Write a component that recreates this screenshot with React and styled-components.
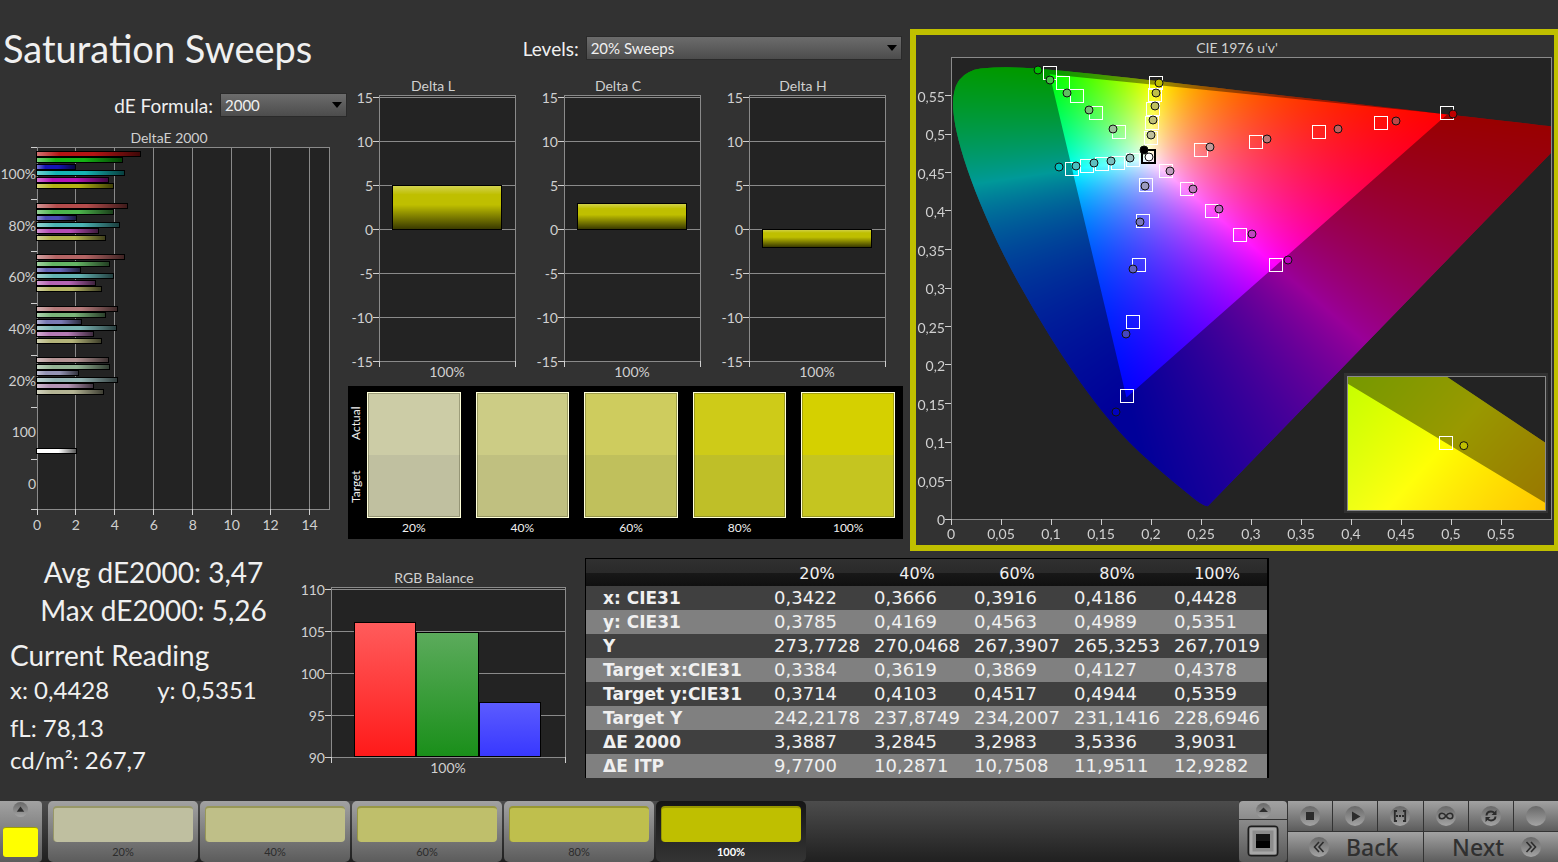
import React, { useLayoutEffect, useRef } from 'react';
import styled, { createGlobalStyle } from 'styled-components';

const GlobalStyle = createGlobalStyle`
  * { box-sizing: border-box; }
  body { margin: 0; background: #323232; color: #f0f0f0; font-family: Lato, "Noto Sans", sans-serif; }
  button, select { font: inherit; margin: 0; }
`;

/* ---------- data ---------- */

const LEVELS = ['20%', '40%', '60%', '80%', '100%'];
const PALETTE = ['#bfbfa0', '#bfbf88', '#bfbf6b', '#bfbf4d', '#bfbf00'];
const ACTUAL = ['#cccca6', '#cccc85', '#cecc5e', '#cecb18', '#d5d000'];
const TARGET = ['#c0c0a0', '#c0c080', '#c0c05c', '#bfbf28', '#c5c520'];

const DELTA_E = [
  { shade: 20, values: [5.27, 4.37, 1.94, 4.47, 3.65, 3.9] },
  { shade: 76, values: [4.62, 3.9, 2.0, 4.21, 3.13, 3.5] },
  { shade: 100, values: [4.47, 3.7, 2.2, 3.9, 2.98, 3.29] },
  { shade: 122, values: [4.11, 3.5, 2.26, 4.06, 2.88, 3.29] },
  { shade: 148, values: [3.65, 3.7, 2.1, 4.11, 2.88, 3.39] },
];
const DELTA_E_LABELS = ['100%', '80%', '60%', '40%', '20%', '100', '0'];
const HUES = ['100', '010', '001', '011', '101', '110'];

const tint = (mask, high, low) =>
  `rgb(${mask.split('').map((bit) => (bit === '1' ? high : low)).join(',')})`;

const TABLE_ROWS = [
  ['x: CIE31', '0,3422', '0,3666', '0,3916', '0,4186', '0,4428'],
  ['y: CIE31', '0,3785', '0,4169', '0,4563', '0,4989', '0,5351'],
  ['Y', '273,7728', '270,0468', '267,3907', '265,3253', '267,7019'],
  ['Target x:CIE31', '0,3384', '0,3619', '0,3869', '0,4127', '0,4378'],
  ['Target y:CIE31', '0,3714', '0,4103', '0,4517', '0,4944', '0,5359'],
  ['Target Y', '242,2178', '237,8749', '234,2007', '231,1416', '228,6946'],
  ['ΔE 2000', '3,3887', '3,2845', '3,2983', '3,5336', '3,9031'],
  ['ΔE ITP', '9,7700', '10,2871', '10,7508', '11,9511', '12,9282'],
];

/* Marker positions on a 600 x 462 plot, from 20% to 100% saturation. */
const SWEEPS = [
  { hue: '010', targets: [[168, 75], [145, 56], [126, 39], [112, 26], [99, 16]], actual: [[162, 72], [138, 53], [116, 36], [99, 23], [87, 13]] },
  { hue: '110', targets: [[200, 81], [201, 66], [202, 52], [204, 38], [205, 26]], actual: [[200, 78], [202, 63], [204, 49], [205, 36], [208, 26]] },
  { hue: '011', targets: [[182, 103], [167, 106], [151, 107], [136, 109], [121, 112]], actual: [[179, 101], [160, 104], [143, 106], [125, 109], [108, 110]] },
  { hue: '001', targets: [[195, 128], [192, 164], [188, 208], [182, 265], [176, 339]], actual: [[194, 129], [189, 165], [182, 212], [175, 277], [165, 355]] },
  { hue: '101', targets: [[215, 114], [236, 132], [261, 154], [289, 178], [325, 208]], actual: [[219, 114], [242, 132], [268, 152], [301, 177], [337, 203]] },
  { hue: '100', targets: [[250, 93], [305, 85], [368, 75], [430, 66], [496, 56]], actual: [[259, 90], [316, 82], [387, 72], [445, 64], [502, 57]] },
];
const MARKER_SHADES = [155, 120, 95, 70, 0];

/* Spectral locus, CIE 1931 xy. */
const LOCUS = [
  [0.1741, 0.005], [0.1714, 0.0051], [0.1644, 0.0109], [0.1566, 0.0177], [0.144, 0.0297],
  [0.1355, 0.0399], [0.1241, 0.0578], [0.1096, 0.0868], [0.0913, 0.1327], [0.0687, 0.2007],
  [0.0454, 0.295], [0.0235, 0.4127], [0.0082, 0.5384], [0.0039, 0.6548], [0.0139, 0.7502],
  [0.0389, 0.812], [0.0743, 0.8338], [0.1142, 0.8262], [0.1547, 0.8059], [0.1929, 0.7816],
  [0.2296, 0.7543], [0.3016, 0.6923], [0.3731, 0.6245], [0.4441, 0.5547], [0.5125, 0.4866],
  [0.5752, 0.4242], [0.627, 0.3725], [0.6658, 0.334], [0.6915, 0.3083], [0.719, 0.2809],
  [0.7347, 0.2653],
];
const GAMUT = [[0.68, 0.32], [0.265, 0.69], [0.15, 0.06]];

/* ---------- colour plane ---------- */

const toUv = ([x, y]) => {
  const d = -2 * x + 12 * y + 3;
  return [(4 * x) / d, (9 * y) / d];
};
const fromUv = (u, v) => {
  const d = 6 * u - 16 * v + 12;
  return [(9 * u) / d, (4 * v) / d];
};

function chromaColor(x, y) {
  const X = x / y;
  const Z = (1 - x - y) / y;
  const rgb = [
    2.4935 * X - 0.9314 - 0.4027 * Z,
    -0.8295 * X + 1.7627 + 0.0236 * Z,
    0.0358 * X - 0.0762 + 0.9569 * Z,
  ].map((c) => Math.max(0, c));
  const top = Math.max(...rgb) || 1;
  return rgb.map((c) => (255 * c) / top);
}

function paintPlane(canvas, space, [x0, x1, y0, y1]) {
  const { width, height } = canvas;
  const ctx = canvas.getContext('2d');
  const field = document.createElement('canvas');
  field.width = width;
  field.height = height;
  const fieldCtx = field.getContext('2d');
  const image = fieldCtx.createImageData(width, height);
  for (let j = 0; j < height; j += 1) {
    const b = y1 - ((j + 0.5) / height) * (y1 - y0);
    for (let i = 0; i < width; i += 1) {
      const a = x0 + ((i + 0.5) / width) * (x1 - x0);
      const [x, y] = space === 'uv' ? fromUv(a, b) : [a, b];
      const [r, g, bl] = chromaColor(x, Math.max(y, 0.001));
      image.data.set([r, g, bl, 255], (j * width + i) * 4);
    }
  }
  fieldCtx.putImageData(image, 0, 0);

  const place = (point) => {
    const [a, b] = space === 'uv' ? toUv(point) : point;
    return [((a - x0) / (x1 - x0)) * width, ((y1 - b) / (y1 - y0)) * height];
  };
  const locus = LOCUS.map(place);
  ctx.clearRect(0, 0, width, height);
  ctx.save();
  ctx.beginPath();
  ctx.moveTo(...locus[0]);
  for (let k = 1; k < locus.length - 1; k += 1) {
    const [cx, cy] = locus[k];
    const [nx, ny] = locus[k + 1];
    ctx.quadraticCurveTo(cx, cy, (cx + nx) / 2, (cy + ny) / 2);
  }
  ctx.lineTo(...locus[locus.length - 1]);
  ctx.closePath();
  ctx.clip();
  ctx.drawImage(field, 0, 0);
  ctx.beginPath();
  ctx.rect(-10, -10, width + 20, height + 20);
  GAMUT.map(place).forEach(([x, y], k) => (k ? ctx.lineTo(x, y) : ctx.moveTo(x, y)));
  ctx.closePath();
  ctx.fillStyle = 'rgba(0, 0, 0, 0.4)';
  ctx.fill('evenodd');
  ctx.restore();
}

/* ---------- layout ---------- */

const Page = styled.div`
  min-height: 100vh;
  display: flex;
  flex-direction: column;
`;
const Upper = styled.main`
  display: grid;
  grid-template-columns: minmax(0, 348fr) minmax(0, 555fr) minmax(0, 655fr);
`;
const Lower = styled.section`
  flex: 1;
  display: grid;
  grid-template-columns: minmax(0, 303fr) minmax(0, 282fr) minmax(0, 684fr) minmax(0, 289fr);
`;
const Column = styled.div`
  display: flex;
  flex-direction: column;
`;
const PageTitle = styled.h1`
  margin: 24px 0 21px;
  padding-left: 3px;
  font-size: 38px;
  font-weight: 400;
  line-height: 48px;
  white-space: nowrap;
`;
const Field = styled.label`
  display: flex;
  justify-content: flex-end;
  align-items: center;
  gap: 7px;
  height: 24px;
  margin-top: ${(p) => p.$top || 0}px;
  font-size: 19px;
`;
const SelectBox = styled.span`
  position: relative;
  width: ${(p) => p.$width};
  margin-right: 1px;
  &::after {
    content: '';
    position: absolute;
    right: 5px;
    top: 9px;
    border: solid transparent;
    border-width: 6px 5px 0;
    border-top-color: #000;
  }
`;
const Select = styled.select`
  appearance: none;
  display: block;
  width: 100%;
  height: 24px;
  padding: 0 4px;
  border: 1px solid #2a2a2a;
  border-radius: 0;
  background: linear-gradient(#6c6c6c, #4c4c4c);
  color: #f0f0f0;
  font-size: 15px;
`;
const ChartTitle = styled.h2`
  margin: 0;
  padding-right: 28px;
  color: #d0d0d0;
  font-size: 14px;
  font-weight: 400;
  line-height: 18px;
  text-align: center;
`;
const Chart = styled.div`
  padding: ${(p) => p.$pad};
`;
const Plot = styled.svg`
  display: block;
  width: 100%;
  height: ${(p) => p.$height}px;
  overflow: visible;
  font-size: 14px;
  fill: #d0d0d0;
  line, rect { shape-rendering: crispEdges; }
`;
const GridLine = styled.line`
  stroke: ${(p) => (p.$tick ? '#d0d0d0' : '#8a8a8a')};
`;
const Frame = styled.rect`
  fill: ${(p) => (p.$empty ? 'none' : '#232323')};
  stroke: #8a8a8a;
`;
const DeltaCharts = styled.div`
  display: grid;
  grid-template-columns: repeat(3, 1fr);
  margin-top: 17px;
`;

const Swatches = styled.section`
  display: flex;
  height: 153px;
  margin-top: 25px;
  padding: 6px 8px 0 0;
  background: #000;
`;
const SwatchList = styled.div`
  flex: 1;
  display: grid;
  grid-template-columns: repeat(5, 1fr);
  column-gap: 15px;
`;
const SideLabels = styled.div`
  display: flex;
  flex-direction: column;
  width: 19px;
  height: 126px;
  font-size: 12px;
`;
const SideLabel = styled.span`
  flex: 1;
  writing-mode: vertical-rl;
  transform: rotate(180deg);
  line-height: 16px;
  text-align: center;
  align-self: flex-start;
`;
const SwatchItem = styled.figure`
  margin: 0;
  font-size: 12px;
`;
const SwatchColor = styled.div`
  height: 126px;
  border: 1px solid #ffffd8;
  box-shadow: inset 0 0 0 1px rgba(70, 70, 40, 0.35);
  background: linear-gradient(${(p) => p.$actual} 50%, ${(p) => p.$target} 50%);
`;
const SwatchCaption = styled.figcaption`
  line-height: 19px;
  text-align: center;
`;

const CiePanel = styled.section`
  align-self: start;
  margin: 29px 0 0 7px;
  border: solid #bfbf00;
  border-width: 6px 4px 6px 6px;
  padding: 4px 3px 26px 35px;
`;
const CieArea = styled.div`
  position: relative;
  display: grid;
  background: #232323;
  & > canvas, & > svg { grid-area: 1 / 1; }
`;
const Plane = styled.canvas`
  display: block;
  width: 100%;
  height: ${(p) => p.$height}px;
`;
const Inset = styled.div`
  position: absolute;
  right: 6px;
  bottom: 9px;
  width: 33%;
  display: grid;
  background: #232323;
  box-shadow: 0 0 0 3px #323232;
  & > canvas, & > svg { grid-area: 1 / 1; }
`;

const Stats = styled.section`
  padding: 2px 0 0 10px;
`;
const BigStat = styled.p`
  margin: 0;
  padding-right: 6px;
  font-size: 28px;
  line-height: 38px;
  text-align: center;
`;
const ReadingTitle = styled.h2`
  margin: 7px 0 0;
  font-size: 28px;
  font-weight: 400;
  line-height: 38px;
`;
const Reading = styled.p`
  display: flex;
  gap: 48px;
  margin: ${(p) => p.$top || 0}px 0 0;
  font-size: 24px;
  line-height: 32px;
`;

const DataTable = styled.table`
  width: 100%;
  margin-top: 7px;
  border: solid #000;
  border-width: 1px 2px 0 1px;
  border-spacing: 0;
  table-layout: fixed;
  align-self: start;
  font-family: "DejaVu Sans", sans-serif;
  font-size: 18px;
  line-height: 24px;
`;
const HeadCell = styled.th`
  width: ${(p) => p.$width};
  height: 27px;
  padding: 2px 0 0;
  background: linear-gradient(#303030 0, #2a2a2a 50%, #181818 52%, #101010 100%);
  font-size: 16px;
  font-weight: 400;
`;
const Row = styled.tr`
  background: #404040;
  &:nth-child(even) { background: #808080; }
`;
const RowHead = styled.th`
  padding: 0 0 0 17px;
  text-align: left;
  white-space: nowrap;
  font-size: 17px;
`;
const Cell = styled.td`
  padding: 0 0 0 7px;
`;

const Footer = styled.footer`
  display: flex;
  height: 61px;
  background: linear-gradient(#4c4c4c, #202020);
`;
const metal = 'linear-gradient(#a2a2a2, #5c5c5c)';
const CurrentPatch = styled.button`
  display: flex;
  flex-direction: column;
  align-items: center;
  justify-content: space-between;
  width: 42px;
  margin-right: 6px;
  padding: 1px 5px 5px 3px;
  border: 0;
  border-radius: 0 4px 4px 0;
  background: ${metal};
`;
const PatchColor = styled.span`
  width: 35px;
  height: 30px;
  border-radius: 3px;
  border-top: 1px solid #a0a000;
  background: #ff0;
`;
const PatchList = styled.nav`
  display: flex;
  flex: 1;
  gap: 2px;
`;
const PatchButton = styled.button`
  display: flex;
  flex-direction: column;
  width: 150px;
  padding: 5px 5px 0;
  border: 0;
  border-radius: 5px;
  background: ${(p) => (p.$active ? 'linear-gradient(#161616, #343434)' : metal)};
  color: ${(p) => (p.$active ? '#fff' : '#2c2c2c')};
  font-size: 11px;
  font-weight: ${(p) => (p.$active ? 700 : 400)};
  line-height: 20px;
  text-align: center;
`;
const PatchFill = styled.span`
  align-self: stretch;
  height: 37px;
  border-radius: 4px;
  border: solid rgba(80, 80, 0, 0.35);
  border-width: 2px 0 0 1px;
  background: ${(p) => p.$color};
`;
const PatchLabel = styled.span`
  align-self: stretch;
`;
const Controls = styled.div`
  display: flex;
  gap: 1px;
  background: #333;
`;
const Stack = styled.div`
  display: flex;
  flex-direction: column;
  gap: 1px;
  width: ${(p) => p.$width}px;
`;
const ButtonRow = styled.div`
  display: grid;
  grid-template-columns: repeat(${(p) => p.$count}, 1fr);
  gap: 1px;
`;
const MetalButton = styled.button`
  display: flex;
  align-items: center;
  justify-content: center;
  height: ${(p) => p.$height}px;
  padding: 0;
  border: 0;
  border-radius: ${(p) => p.$radius || '0'};
  background: ${(p) => p.$tone || metal};
`;
const NavButton = styled(MetalButton)`
  justify-content: ${(p) => p.$align};
  gap: 17px;
  padding: 0 17px 0 21px;
  color: #303030;
  font-family: "Noto Sans", "Open Sans", sans-serif;
  font-size: 23px;
  font-weight: 500;
  line-height: 28px;
`;
const Icon = styled.svg`
  display: block;
  flex: none;
`;

/* ---------- charts ---------- */

function BarFades() {
  return (
    <defs>
      <linearGradient id="fadeAcross" x1="0" x2="1" y1="0" y2="0">
        <stop offset="0" stopColor="#fff" stopOpacity="0.4" />
        <stop offset="0.22" stopColor="#fff" stopOpacity="0" />
        <stop offset="0.55" stopColor="#000" stopOpacity="0" />
        <stop offset="1" stopColor="#000" stopOpacity="0.65" />
      </linearGradient>
      <linearGradient id="fadeDown" x1="0" x2="0" y1="0" y2="1">
        <stop offset="0" stopColor="#fff" stopOpacity="0.35" />
        <stop offset="0.22" stopColor="#fff" stopOpacity="0" />
        <stop offset="0.45" stopColor="#000" stopOpacity="0" />
        <stop offset="1" stopColor="#000" stopOpacity="0.7" />
      </linearGradient>
    </defs>
  );
}

function AcrossBar({ y, value, color }) {
  const size = { y, width: `${(value / 15) * 100}%`, height: 4 };
  return (
    <g>
      <rect {...size} fill={color} stroke="#000" strokeWidth="2" paintOrder="stroke" />
      <rect {...size} fill="url(#fadeAcross)" />
    </g>
  );
}

function DeltaEChart() {
  return (
    <Chart $pad="12px 19px 0 37px">
      <ChartTitle>DeltaE 2000</ChartTitle>
      <Plot $height={362} role="img" aria-label="DeltaE 2000">
        <BarFades />
        <Frame width="100%" height="100%" />
        {[0, 2, 4, 6, 8, 10, 12, 14].map((v) => {
          const x = `${(v / 15) * 100}%`;
          return (
            <g key={v}>
              <GridLine x1={x} x2={x} y1="0" y2="100%" />
              <svg x={x} y="100%" overflow="visible">
                <GridLine $tick y1="0" y2="6" />
                <text y="21" textAnchor="middle">{v}</text>
              </svg>
            </g>
          );
        })}
        {DELTA_E_LABELS.map((label, i) => (
          <g key={label}>
            <GridLine $tick x1="-6" x2="0" y1={i * 52} y2={i * 52} />
            <text x="-1" y={32 + i * 52 - Math.round(i / 3)} textAnchor="end">{label}</text>
          </g>
        ))}
        <GridLine $tick x1="-6" x2="0" y1="100%" y2="100%" />
        {DELTA_E.map((group, i) => group.values.map((value, k) => (
          <AcrossBar
            key={`${i}-${HUES[k]}`}
            y={Math.round(5 + i * 51.6 + k * 6.4)}
            value={value}
            color={tint(HUES[k], 180, group.shade)}
          />
        )))}
        <AcrossBar y={302} value={2} color="#fff" />
      </Plot>
    </Chart>
  );
}

function LevelAxis({ ticks, place }) {
  return ticks.map((v) => (
    <g key={v}>
      <GridLine x1="0" x2="100%" y1={place(v)} y2={place(v)} />
      <GridLine $tick x1="-6" x2="0" y1={place(v)} y2={place(v)} />
      <text x="-6" y={place(v) + 6} textAnchor="end">{v}</text>
    </g>
  ));
}

function BottomTicks({ label }) {
  return (
    <>
      {['0%', '100%'].map((x) => (
        <svg key={x} x={x} y="100%" overflow="visible">
          <GridLine $tick y1="0" y2="6" />
        </svg>
      ))}
      <svg x="50%" y="100%" overflow="visible">
        <text y="16" textAnchor="middle">{label}</text>
      </svg>
    </>
  );
}

function DeltaChart({ title, value }) {
  const place = (v) => Math.round(2 + (15 - v) * 8.8);
  const top = place(Math.max(value, 0));
  const size = { x: '10%', y: top, width: '80%', height: place(Math.min(value, 0)) - top };
  return (
    <Chart $pad="0 18px 0 31px">
      <ChartTitle>{title}</ChartTitle>
      <Plot $height={266} role="img" aria-label={title}>
        <Frame width="100%" height="100%" />
        <LevelAxis ticks={[15, 10, 5, 0, -5, -10, -15]} place={place} />
        <rect {...size} fill="#bfbf00" />
        <rect {...size} fill="url(#fadeDown)" stroke="#000" />
        <BottomTicks label="100%" />
      </Plot>
    </Chart>
  );
}

const BALANCE = [
  { id: 'balanceRed', from: '#ff5c5c', to: '#ff1a1a', value: 106.1 },
  { id: 'balanceGreen', from: '#5cab5c', to: '#1a8f1a', value: 104.9 },
  { id: 'balanceBlue', from: '#5c5cff', to: '#3838ff', value: 96.5 },
];

function BalanceChart() {
  const place = (v) => Math.round(2 + (110 - v) * 8.4);
  return (
    <Chart $pad="18px 20px 0 28px">
      <ChartTitle>RGB Balance</ChartTitle>
      <Plot $height={170} role="img" aria-label="RGB Balance">
        <defs>
          {BALANCE.map((bar) => (
            <linearGradient key={bar.id} id={bar.id} x1="0" x2="0" y1="0" y2="1">
              <stop offset="0" stopColor={bar.from} />
              <stop offset="1" stopColor={bar.to} />
            </linearGradient>
          ))}
        </defs>
        <Frame width="100%" height="100%" />
        <LevelAxis ticks={[110, 105, 100, 95, 90]} place={place} />
        {BALANCE.map((bar, i) => (
          <rect
            key={bar.id}
            x={`${10 + i * 26.7}%`}
            y={place(bar.value)}
            width="26.3%"
            height={169 - place(bar.value)}
            fill={`url(#${bar.id})`}
            stroke="#000"
          />
        ))}
        <BottomTicks label="100%" />
      </Plot>
    </Chart>
  );
}

function ChromaPlane({ space, range, width, height }) {
  const ref = useRef(null);
  useLayoutEffect(() => {
    paintPlane(ref.current, space, range);
  }, []);
  return <Plane ref={ref} width={width} height={height} $height={height} />;
}

function TargetMarker({ x, y, color = '#fff', weight = 1 }) {
  return (
    <svg x={x} y={y} overflow="visible">
      <rect x="-7" y="-7" width="13" height="13" fill="none" stroke={color} strokeWidth={weight} />
    </svg>
  );
}

function ReadingMarker({ x, y, color }) {
  return (
    <svg x={x} y={y} overflow="visible">
      <circle r="4" fill={color} stroke="#111" strokeWidth="1" />
    </svg>
  );
}

const decimal = (v) => String(v / 100).replace('.', ',');

function CieChart() {
  const px = (x) => `${(x / 600) * 100}%`;
  const steps = [0, 5, 10, 15, 20, 25, 30, 35, 40, 45, 50, 55];
  return (
    <CiePanel>
      <ChartTitle>CIE 1976 u'v'</ChartTitle>
      <CieArea>
        <ChromaPlane space="uv" range={[0, 0.6, 0, 0.6]} width={600} height={462} />
        <Plot $height={462} role="img" aria-label="CIE 1976 u'v'">
          <Frame $empty width="100%" height="100%" />
          {steps.map((v) => (
            <g key={v}>
              <svg x={`${(v / 60) * 100}%`} y="100%" overflow="visible">
                <GridLine $tick y1="0" y2="6" />
                <text y="20" textAnchor="middle">{decimal(v)}</text>
              </svg>
              <svg y={`${100 - (v / 60) * 100}%`} overflow="visible">
                <GridLine $tick x1="-6" x2="0" />
                <text x="-6" y="6" textAnchor="end">{decimal(v)}</text>
              </svg>
            </g>
          ))}
          {SWEEPS.map((sweep) => sweep.targets.map(([x, y]) => (
            <TargetMarker key={`${sweep.hue}-${x}`} x={px(x)} y={y} />
          )))}
          <TargetMarker x={px(198)} y={100} color="#000" weight={2} />
          {SWEEPS.map((sweep) => sweep.actual.map(([x, y], i) => (
            <ReadingMarker key={`${sweep.hue}-${x}`} x={px(x)} y={y} color={tint(sweep.hue, 191, MARKER_SHADES[i])} />
          )))}
          <ReadingMarker x={px(193)} y={93} color="#000" />
          <ReadingMarker x={px(198)} y={100} color="#fff" />
        </Plot>
        <Inset>
          <ChromaPlane space="xy" range={[0.4128, 0.4628, 0.5109, 0.5609]} width={198} height={134} />
          <Plot $height={134} aria-hidden="true">
            <Frame $empty width="100%" height="100%" />
            <TargetMarker x="50%" y="50%" />
            <ReadingMarker x="59%" y="52%" color="#bfbf00" />
          </Plot>
        </Inset>
      </CieArea>
    </CiePanel>
  );
}

/* ---------- footer icons ---------- */

function RoundIcon({ id, size = 20, children }) {
  return (
    <Icon width={size} height={size} viewBox="0 0 20 20" aria-hidden="true">
      <defs>
        <linearGradient id={id} x1="0" x2="0" y1="0" y2="1">
          <stop offset="0" stopColor="#686868" />
          <stop offset="1" stopColor="#a4a4a4" />
        </linearGradient>
      </defs>
      <circle cx="10" cy="10" r="10" fill={`url(#${id})`} />
      {children}
    </Icon>
  );
}

const stroke = { fill: 'none', stroke: '#2c2c2c', strokeWidth: 2 };

const TRANSPORT = [
  { name: 'Stop', art: <rect x="6" y="6" width="8" height="8" fill="#2c2c2c" /> },
  { name: 'Play', art: <path d="M7 5.500L15.500 10.500 7 15.500z" fill="#2c2c2c" /> },
  {
    name: 'Read series',
    art: (
      <g {...stroke} strokeWidth="1.8">
        <path d="M7 5H4.800V15H7M13 5h2.200V15H13" />
        <path d="M6 10h2M9 10h2M12 10h2" />
      </g>
    ),
  },
  {
    name: 'Continuous',
    art: <path d="M10 10C8.500 7.800 7.500 7.200 6 7.200a2.800 2.800 0 000 5.600C7.500 12.800 8.500 12.200 10 10s2.500-2.800 4-2.800a2.800 2.800 0 010 5.600C12.500 12.800 11.500 12.200 10 10z" {...stroke} strokeWidth="1.600" />,
  },
  {
    name: 'Refresh',
    art: (
      <g>
        <path d="M5.500 9.500C5.700 7 7.500 5.600 10 5.600c1.500 0 2.600.5 3.500 1.500M14.500 10.500c-.2 2.500-2 3.900-4.500 3.900-1.500 0-2.600-.5-3.500-1.500" {...stroke} />
        <path d="M15.500 4v5h-5zM4.500 16v-5h5z" fill="#2c2c2c" />
      </g>
    ),
  },
  { name: 'Record', art: null },
];

function ControlDeck() {
  return (
    <Controls>
      <Stack $width={48}>
        <MetalButton $height={18} $radius="4px 4px 0 0" $tone="linear-gradient(#a2a2a2, #8c8c8c)" aria-label="Expand">
          <RoundIcon id="expandRight" size={15}>
            <path d="M4 12l6-6 6 6z" fill="#2c2c2c" />
          </RoundIcon>
        </MetalButton>
        <MetalButton $height={42} $radius="0 0 4px 4px" $tone="linear-gradient(#8a8a8a, #585858)" aria-label="Window pattern">
          <Icon width="32" height="32" viewBox="0 0 32 32" aria-hidden="true">
            <rect x="1.500" y="1.500" width="29" height="29" rx="3" fill="#8c8c8c" stroke="#1c1c1c" strokeWidth="2" />
            <rect x="4" y="4" width="24" height="24" fill="none" stroke="#a8a8a8" strokeWidth="3" />
            <rect x="9" y="9" width="14" height="14" fill="#000" />
            <rect x="9" y="9" width="14" height="7" fill="#141414" />
          </Icon>
        </MetalButton>
      </Stack>
      <Stack $width={270}>
        <ButtonRow $count={6}>
          {TRANSPORT.map((item, i) => (
            <MetalButton key={item.name} $height={30} aria-label={item.name}>
              <RoundIcon id={`transport${i}`}>{item.art}</RoundIcon>
            </MetalButton>
          ))}
        </ButtonRow>
        <ButtonRow $count={2}>
          <NavButton $height={30} $align="flex-start">
            <RoundIcon id="backDisc">
              <path d="M10 5l-4.500 5L10 15M14.500 5L10 10l4.500 5" {...stroke} strokeWidth="1.600" />
            </RoundIcon>
            Back
          </NavButton>
          <NavButton $height={30} $align="flex-end">
            Next
            <RoundIcon id="nextDisc">
              <path d="M5.500 5L10 10l-4.500 5M10 5l4.500 5L10 15" {...stroke} strokeWidth="1.600" />
            </RoundIcon>
          </NavButton>
        </ButtonRow>
      </Stack>
    </Controls>
  );
}

/* ---------- page ---------- */

export default function App() {
  return (
    <Page>
      <GlobalStyle />
      <Upper>
        <Column>
          <PageTitle>Saturation Sweeps</PageTitle>
          <Field>
            dE Formula:
            <SelectBox $width="127px">
              <Select defaultValue="2000">
                <option>2000</option>
              </Select>
            </SelectBox>
          </Field>
          <DeltaEChart />
        </Column>

        <Column>
          <Field $top={36}>
            Levels:
            <SelectBox $width="57%">
              <Select defaultValue="20% Sweeps">
                <option>20% Sweeps</option>
              </Select>
            </SelectBox>
          </Field>
          <DeltaCharts>
            <DeltaChart title="Delta L" value={5} />
            <DeltaChart title="Delta C" value={2.9} />
            <DeltaChart title="Delta H" value={-2.1} />
          </DeltaCharts>
          <Swatches>
            <SideLabels>
              <SideLabel>Actual</SideLabel>
              <SideLabel>Target</SideLabel>
            </SideLabels>
            <SwatchList>
              {LEVELS.map((level, i) => (
                <SwatchItem key={level}>
                  <SwatchColor $actual={ACTUAL[i]} $target={TARGET[i]} />
                  <SwatchCaption>{level}</SwatchCaption>
                </SwatchItem>
              ))}
            </SwatchList>
          </Swatches>
        </Column>

        <CieChart />
      </Upper>

      <Lower>
        <Stats>
          <BigStat>Avg dE2000: 3,47</BigStat>
          <BigStat>Max dE2000: 5,26</BigStat>
          <ReadingTitle>Current Reading</ReadingTitle>
          <Reading>
            <span>x: 0,4428</span>
            <span>y: 0,5351</span>
          </Reading>
          <Reading $top={6}>fL: 78,13</Reading>
          <Reading>cd/m²: 267,7</Reading>
        </Stats>
        <BalanceChart />
        <DataTable>
          <thead>
            <tr>
              <HeadCell $width="auto" />
              {LEVELS.map((level) => (
                <HeadCell key={level} $width="100px" scope="col">{level}</HeadCell>
              ))}
            </tr>
          </thead>
          <tbody>
            {TABLE_ROWS.map(([name, ...cells]) => (
              <Row key={name}>
                <RowHead scope="row">{name}</RowHead>
                {cells.map((cell, i) => (
                  <Cell key={LEVELS[i]}>{cell}</Cell>
                ))}
              </Row>
            ))}
          </tbody>
        </DataTable>
      </Lower>

      <Footer>
        <CurrentPatch aria-label="Current patch">
          <RoundIcon id="expandLeft" size={15}>
            <path d="M5 13l5-7 5 7z" fill="#2c2c2c" />
          </RoundIcon>
          <PatchColor />
        </CurrentPatch>
        <PatchList>
          {LEVELS.map((level, i) => (
            <PatchButton key={level} $active={i === 4}>
              <PatchFill $color={PALETTE[i]} />
              <PatchLabel>{level}</PatchLabel>
            </PatchButton>
          ))}
        </PatchList>
        <ControlDeck />
      </Footer>
    </Page>
  );
}
